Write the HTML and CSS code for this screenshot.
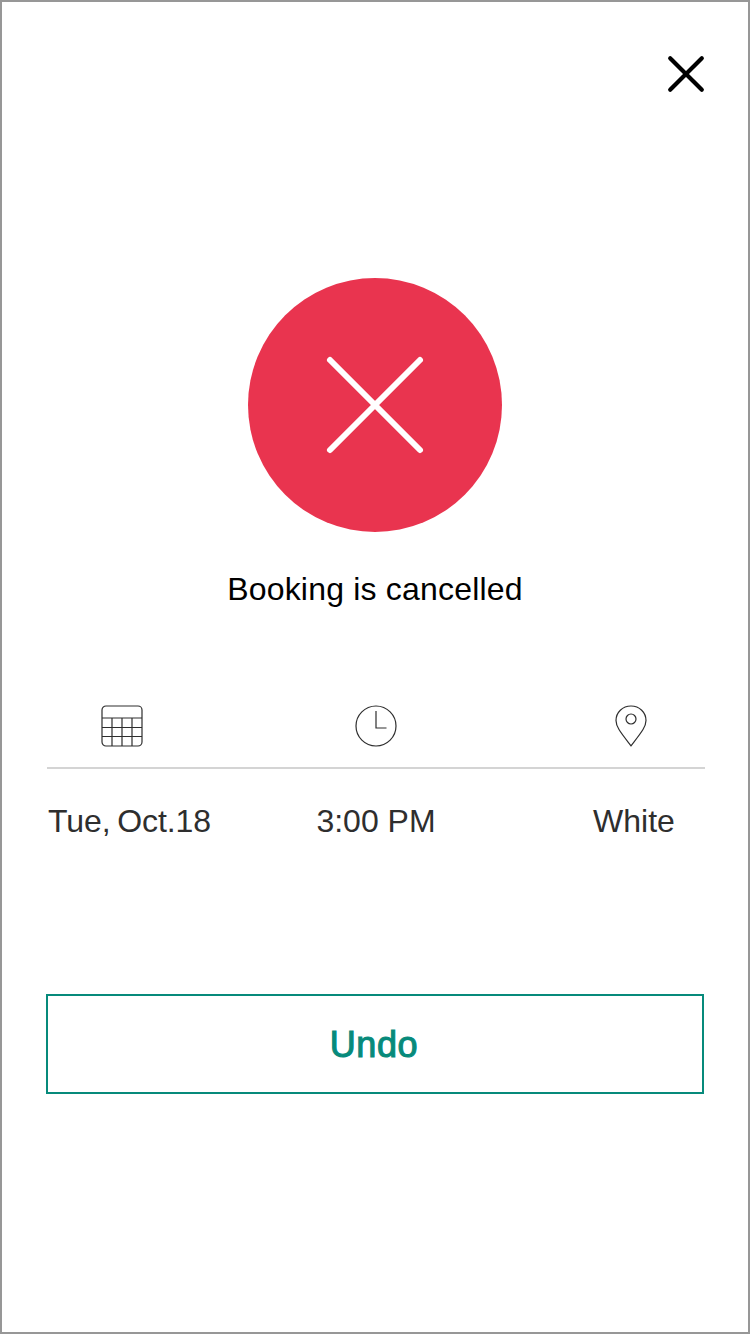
FILE: index.html
```html
<!DOCTYPE html>
<html lang="en">
<head>
<meta charset="utf-8">
<title>Booking is cancelled</title>
<link rel="stylesheet" href="styles.css">
</head>
<body>
<main class="screen">
  <header class="topbar">
    <button class="close" aria-label="Close">
      <svg width="40" height="40" viewBox="0 0 40 40"><path d="M4.2 4.2 35.8 35.8M35.8 4.2 4.2 35.8"/></svg>
    </button>
  </header>
  <section class="status">
    <div class="badge">
      <svg width="100" height="100" viewBox="0 0 100 100"><path d="M5 5 95 95M95 5 5 95"/></svg>
    </div>
    <h1 class="title">Booking is cancelled</h1>
  </section>
  <section class="details">
    <div class="icons">
      <svg class="icon" width="44" height="44" viewBox="0 0 44 44">
        <rect x="2" y="2" width="40" height="40" rx="4"/>
        <path d="M2 14H42M2 23.5H42M2 32.5H42M12 14V42M22 14V42M32 14V42"/>
      </svg>
      <svg class="icon" width="44" height="44" viewBox="0 0 44 44">
        <circle cx="22" cy="22" r="20"/>
        <path d="M22 7V24H32.5"/>
      </svg>
      <svg class="icon" width="44" height="44" viewBox="0 0 44 44">
        <path d="M22 41.8C18.5 37.2 12.8 30.2 10 25.5C8.2 22.5 7 19.8 7 16.5C7 8.5 13.5 2 22 2S37 8.5 37 16.5C37 19.8 35.8 22.5 34 25.5C31.2 30.2 25.5 37.2 22 41.8Z"/>
        <circle cx="22" cy="15" r="5"/>
      </svg>
    </div>
    <div class="values">
      <span class="value date">Tue, Oct.18</span>
      <span class="value time">3:00 PM</span>
      <span class="value place">White</span>
    </div>
  </section>
  <button class="undo">Undo</button>
</main>
</body>
</html>
```
FILE: styles.css
```css
* { box-sizing: border-box; }
body { margin: 0; background: #fff; font-family: "Liberation Sans", Arial, sans-serif; }
button { font: inherit; background: none; padding: 0; cursor: pointer; }
svg { display: block; fill: none; }

.screen {
  width: 750px;
  height: 1334px;
  padding: 52px 44px 0;
  border: 2px solid #979797;
  display: flex;
  flex-direction: column;
}
.topbar { display: flex; justify-content: flex-end; height: 40px; margin-right: -2px; }
.close { width: 40px; height: 40px; border: 0; stroke: #000; stroke-width: 4.2; stroke-linecap: round; }

.status { margin-top: 184px; display: flex; flex-direction: column; align-items: center; }
.badge {
  width: 254px;
  height: 254px;
  border-radius: 50%;
  background: #e9344f;
  display: flex;
  align-items: center;
  justify-content: center;
  stroke: #fff;
  stroke-width: 6;
  stroke-linecap: round;
}
.title { margin: 37px 0 0; font-size: 32px; line-height: 40px; font-weight: 400; color: #000; white-space: nowrap; letter-spacing: 0.2px; }

.details { margin: 95px -1px 0 1px; }
.icons {
  display: grid;
  grid-template-columns: 254px 255px 44px;
  height: 65px;
  padding-left: 53px;
  border-bottom: 2px solid #d4d4d4;
}
.icon { stroke: #2e2e2e; stroke-width: 1.2; }
.values {
  display: grid;
  grid-template-columns: 200px 258px 200px;
  padding-top: 32px;
  font-size: 32px;
  line-height: 40px;
  color: #2e2e2e;
  white-space: nowrap;
}
.date { padding-left: 1px; letter-spacing: -0.1px; word-spacing: -2px; }
.time { text-align: center; }
.place { text-align: center; padding-left: 58px; }

.undo {
  height: 100px;
  margin-top: 153px;
  padding: 2px 2px 0 0;
  border: 2px solid #078a7b;
  color: #078a7b;
  font-size: 36px;
  line-height: 40px;
  letter-spacing: 0.6px;
  -webkit-text-stroke: 1.1px #078a7b;
}
```
